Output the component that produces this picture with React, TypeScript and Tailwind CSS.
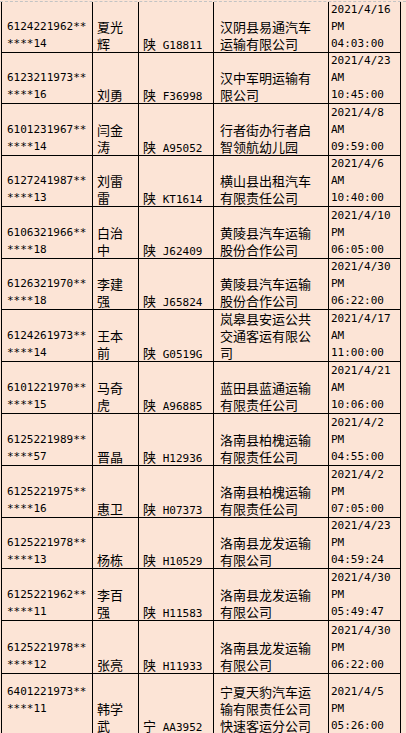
const mono = "font-['DejaVu_Sans_Mono',monospace] text-[11px]"
const cjk = "font-['Noto_Sans_CJK_SC',sans-serif] text-[13px]"

type Row = {
  h: string
  id: Array<string>
  name: Array<string>
  plate: [string, string]
  company: Array<string>
  date: Array<string>
}

const ROWS: Array<Row> = [
  { h: 'h-[51px]', id: ['6124221962**', '****14'], name: ['夏光', '辉'], plate: ['陕', 'G18811'], company: ['汉阴县易通汽车', '运输有限公司'], date: ['2021/4/16', 'PM', '04:03:00'] },
  { h: 'h-[51px]', id: ['6123211973**', '****16'], name: ['刘勇'], plate: ['陕', 'F36998'], company: ['汉中军明运输有', '限公司'], date: ['2021/4/23', 'AM', '10:45:00'] },
  { h: 'h-[52px]', id: ['6101231967**', '****14'], name: ['闫金', '涛'], plate: ['陕', 'A95052'], company: ['行者街办行者启', '智领航幼儿园'], date: ['2021/4/8', 'AM', '09:59:00'] },
  { h: 'h-[51px]', id: ['6127241987**', '****13'], name: ['刘雷', '雷'], plate: ['陕', 'KT1614'], company: ['横山县出租汽车', '有限责任公司'], date: ['2021/4/6', 'AM', '10:40:00'] },
  { h: 'h-[52px]', id: ['6106321966**', '****18'], name: ['白治', '中'], plate: ['陕', 'J62409'], company: ['黄陵县汽车运输', '股份合作公司'], date: ['2021/4/10', 'PM', '06:05:00'] },
  { h: 'h-[51px]', id: ['6126321970**', '****18'], name: ['李建', '强'], plate: ['陕', 'J65824'], company: ['黄陵县汽车运输', '股份合作公司'], date: ['2021/4/30', 'PM', '06:22:00'] },
  { h: 'h-[52px]', id: ['6124261973**', '****14'], name: ['王本', '前'], plate: ['陕', 'G0519G'], company: ['岚皋县安运公共', '交通客运有限公', '司'], date: ['2021/4/17', 'AM', '11:00:00'] },
  { h: 'h-[52px]', id: ['6101221970**', '****15'], name: ['马奇', '虎'], plate: ['陕', 'A96885'], company: ['蓝田县蓝通运输', '有限责任公司'], date: ['2021/4/21', 'AM', '10:06:00'] },
  { h: 'h-[52px]', id: ['6125221989**', '****57'], name: ['晋晶'], plate: ['陕', 'H12936'], company: ['洛南县柏槐运输', '有限责任公司'], date: ['2021/4/2', 'PM', '04:55:00'] },
  { h: 'h-[52px]', id: ['6125221975**', '****16'], name: ['惠卫'], plate: ['陕', 'H07373'], company: ['洛南县柏槐运输', '有限责任公司'], date: ['2021/4/2', 'PM', '07:05:00'] },
  { h: 'h-[51px]', id: ['6125221978**', '****13'], name: ['杨栋'], plate: ['陕', 'H10529'], company: ['洛南县龙发运输', '有限公司'], date: ['2021/4/23', 'PM', '04:59:24'] },
  { h: 'h-[52px]', id: ['6125221962**', '****11'], name: ['李百', '强'], plate: ['陕', 'H11583'], company: ['洛南县龙发运输', '有限公司'], date: ['2021/4/30', 'PM', '05:49:47'] },
  { h: 'h-[53px]', id: ['6125221978**', '****12'], name: ['张亮'], plate: ['陕', 'H11933'], company: ['洛南县龙发运输', '有限公司'], date: ['2021/4/30', 'PM', '06:22:00'] },
  { h: 'h-[61px]', id: ['6401221973**', '****11', ''], name: ['韩学', '武'], plate: ['宁', 'AA3952'], company: ['宁夏天豹汽车运', '输有限责任公司', '快速客运分公司'], date: ['2021/4/5', 'PM', '05:26:00'] },
]

function Lines({ lines, font }: { lines: Array<string>; font: string }) {
  return (
    <>
      {lines.map((line, i) => (
        <div key={i} className={`h-[17px] leading-[17px] whitespace-nowrap ${font}`}>
          {line}
        </div>
      ))}
    </>
  )
}

export default function App() {
  return (
    <div className="min-h-screen overflow-hidden bg-[#fce4d6] pt-px text-black">
      <div className="border-t border-dashed border-[#c4c4c4]" />
      <div className="ml-px w-[400px] border-l border-black">
        {ROWS.map((row, i) => (
          <div key={i} className={`flex border-b border-black ${row.h}`}>
            <div className="flex w-[91px] shrink-0 flex-col justify-end border-r border-black pl-[5px]">
              <Lines lines={row.id} font={mono} />
            </div>
            <div className="flex w-[46px] shrink-0 flex-col justify-end border-r border-black pl-[4px]">
              <Lines lines={row.name} font={cjk} />
            </div>
            <div className="flex w-[75px] shrink-0 flex-col justify-end border-r border-black pl-[4px]">
              <div className="h-[17px] leading-[17px] whitespace-nowrap">
                <span className={cjk}>{row.plate[0]}</span>
                <span className={mono}> {row.plate[1]}</span>
              </div>
            </div>
            <div className="flex w-[115px] shrink-0 flex-col justify-end border-r border-black pl-[6px]">
              <Lines lines={row.company} font={cjk} />
            </div>
            <div className="flex w-[72px] shrink-0 flex-col justify-end border-r border-black pl-[2px]">
              <Lines lines={row.date} font={mono} />
            </div>
          </div>
        ))}
      </div>
    </div>
  )
}
